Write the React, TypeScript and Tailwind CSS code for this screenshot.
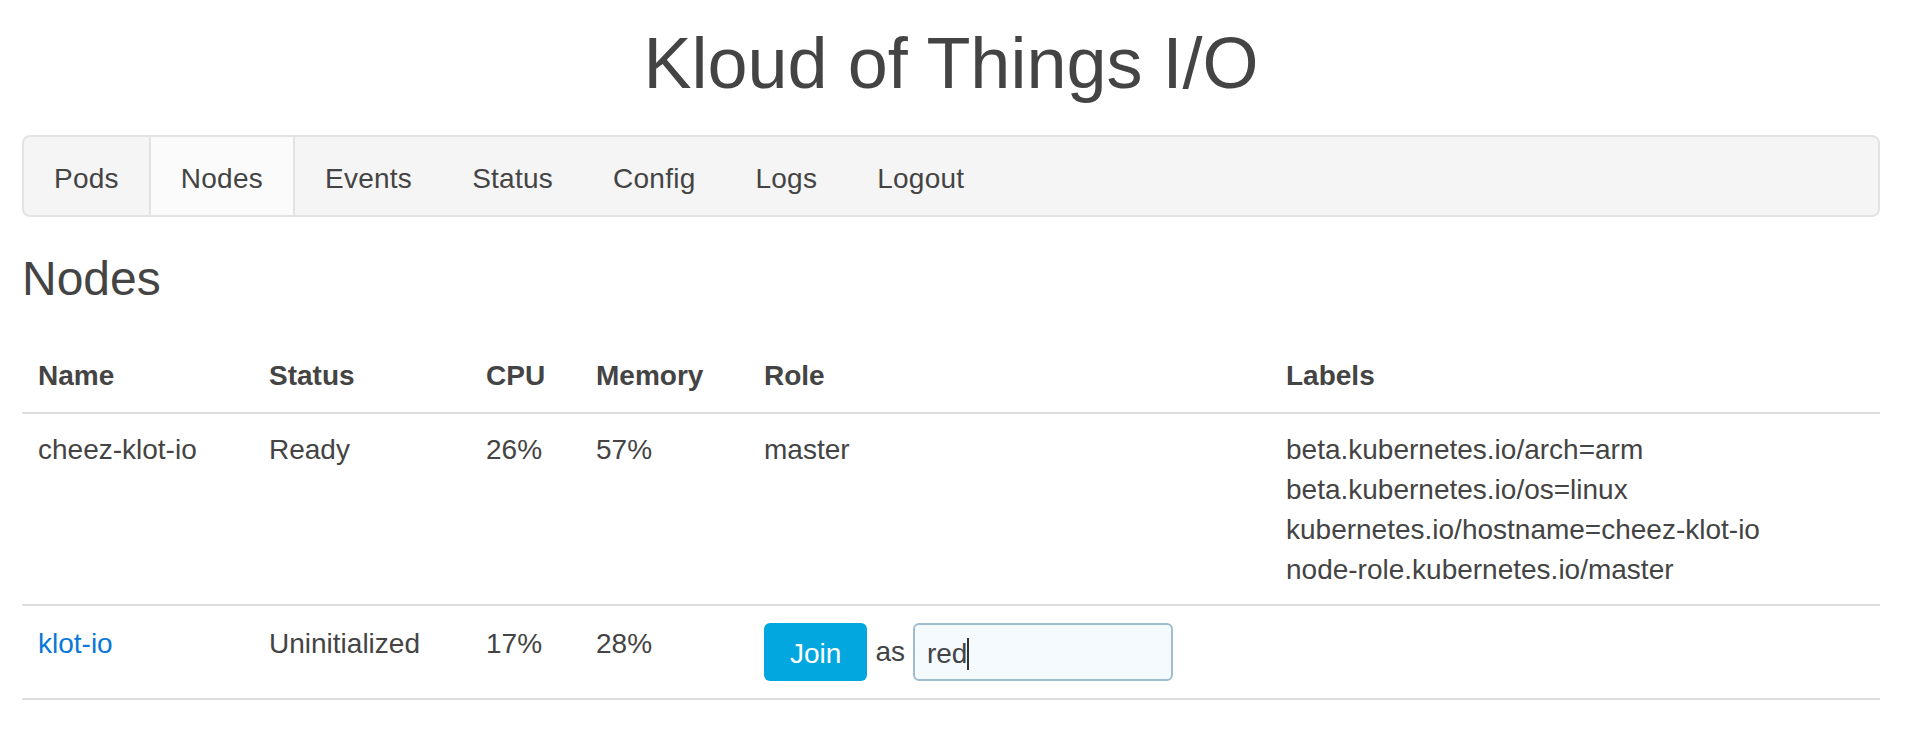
const tabs = ["Pods", "Nodes", "Events", "Status", "Config", "Logs", "Logout"];

const labels = [
  "beta.kubernetes.io/arch=arm",
  "beta.kubernetes.io/os=linux",
  "kubernetes.io/hostname=cheez-klot-io",
  "node-role.kubernetes.io/master",
];

function NavBar() {
  return (
    <nav className="mt-[32px] flex h-[82px] rounded-[8px] border-2 border-[#e3e3e3] bg-[#f5f5f5]">
      {tabs.map((tab) => (
        <a
          key={tab}
          className={`px-[30px] pt-[22px] pb-[16px] text-[28px] leading-[40px] tracking-[0.25px] text-[#444] ${
            tab === "Nodes" ? "border-x-2 border-[#e3e3e3] bg-[#fbfbfb]" : ""
          }`}
        >
          {tab}
        </a>
      ))}
    </nav>
  );
}

export default function App() {
  const th = "border-b-2 border-[#dddddd] px-[16px] pt-[18px] pb-[16px] text-left align-bottom font-bold leading-[40px]";
  const td1 = "border-b-2 border-[#dddddd] px-[16px] pt-[16px] pb-[14px] align-top leading-[40px]";
  const td2 = "border-b-2 border-[#dddddd] px-[16px] pt-[18px] pb-[16px] align-top leading-[40px]";

  return (
    <div className="min-h-screen bg-white pl-[22px] pr-[30px] font-['Liberation_Sans',Arial,sans-serif] text-[28px] text-[#444]">
      <h1 className="pt-[24px] text-center text-[72px] font-normal leading-[1.1]">Kloud of Things I/O</h1>
      <NavBar />
      <h2 className="mt-[36px] text-[48px] font-normal leading-[1.1]">Nodes</h2>
      <table className="mt-[32px] w-full table-fixed border-separate border-spacing-0">
        <colgroup>
          <col className="w-[231px]" />
          <col className="w-[217px]" />
          <col className="w-[110px]" />
          <col className="w-[168px]" />
          <col className="w-[522px]" />
          <col />
        </colgroup>
        <thead>
          <tr>
            <th className={th}>Name</th>
            <th className={th}>Status</th>
            <th className={th}>CPU</th>
            <th className={th}>Memory</th>
            <th className={th}>Role</th>
            <th className={th}>Labels</th>
          </tr>
        </thead>
        <tbody>
          <tr>
            <td className={td1}>cheez-klot-io</td>
            <td className={td1}>Ready</td>
            <td className={td1}>26%</td>
            <td className={td1}>57%</td>
            <td className={td1}>master</td>
            <td className={td1}>
              {labels.map((label) => (
                <div key={label}>{label}</div>
              ))}
            </td>
          </tr>
          <tr>
            <td className={td2}>
              <a className="text-[#0a78d9]">klot-io</a>
            </td>
            <td className={td2}>Uninitialized</td>
            <td className={td2}>17%</td>
            <td className={td2}>28%</td>
            <td className={td2}>
              <div className="-mt-[2px] flex h-[60px] items-start gap-[8px]">
                <button className="mt-[1px] h-[58px] rounded-[6px] bg-[#02a7df] px-[26px] pt-[4px] leading-[40px] text-white" type="button">
                  Join
                </button>
                <span className="mt-[10px]">as</span>
                <div className="mt-[1px] flex h-[58px] w-[260px] items-center rounded-[6px] border-2 border-[#9dbdd0] bg-[#f5faff] px-[12px] pt-[4px]">
                  <span>red</span>
                  <span className="h-[32px] w-[2px] bg-[#333]" />
                </div>
              </div>
            </td>
            <td className={td2}></td>
          </tr>
        </tbody>
      </table>
    </div>
  );
}
